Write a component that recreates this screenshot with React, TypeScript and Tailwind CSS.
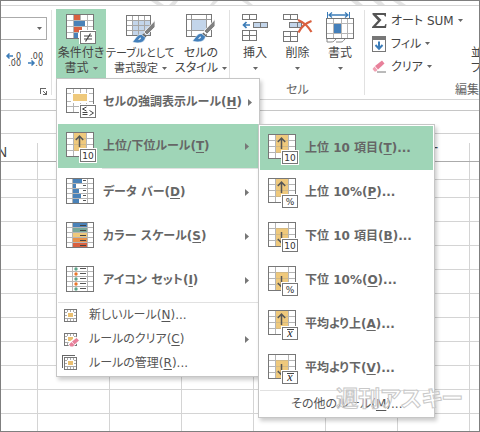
import type { ReactNode } from "react";

// ─── Data ────────────────────────────────────────────────────

type BadgeKind = "ten" | "percent" | "mean";

interface RuleItem {
  label: string;
  accel: string;
  arrow: "up" | "down";
  badge: BadgeKind;
}

const TOP_BOTTOM_RULES: RuleItem[] = [
  { label: "上位 10 項目", accel: "T", arrow: "up", badge: "ten" },
  { label: "上位 10%", accel: "P", arrow: "up", badge: "percent" },
  { label: "下位 10 項目", accel: "B", arrow: "down", badge: "ten" },
  { label: "下位 10%", accel: "O", arrow: "down", badge: "percent" },
  { label: "平均より上", accel: "A", arrow: "up", badge: "mean" },
  { label: "平均より下", accel: "V", arrow: "down", badge: "mean" },
];

const COLUMNS = ["N", "O", "P", "Q", "R", "S", "T", ""];
const ROWS = ["short", "short", ...Array(9).fill("tall"), "rest"];

// ─── Small shared pieces ─────────────────────────────────────

function Caret() {
  return (
    <svg width="5" height="3" viewBox="0 0 5 3" className="shrink-0" aria-hidden="true">
      <path d="M0 0h5L2.5 3z" fill="#666" />
    </svg>
  );
}

function SubmenuArrow() {
  return (
    <svg width="4" height="7" viewBox="0 0 4 7" className="mr-[9px] ml-auto shrink-0" aria-hidden="true">
      <path d="M0 0v7l4-3.5z" fill="#777" />
    </svg>
  );
}

function Accel({ label, accel, dots }: { label: string; accel: string; dots?: boolean }) {
  return (
    <span className="whitespace-nowrap">
      {label}(<u className="underline-offset-2">{accel}</u>){dots && "..."}
    </span>
  );
}

// ─── Menu icons ──────────────────────────────────────────────

function IconFrame({ children }: { children: ReactNode }) {
  return (
    <svg width="31" height="31" viewBox="0 0 31 31" className="shrink-0" shapeRendering="crispEdges" aria-hidden="true">
      {children}
    </svg>
  );
}

function HighlightIcon() {
  return (
    <IconFrame>
      <rect x="0.5" y="0.5" width="27" height="24" fill="#fff" stroke="#777" />
      <path d="M7.5 1v23M14.5 1v23M20.5 1v23M1 5.5h26M1 13.5h26M1 18.5h26" stroke="#b5b5b5" fill="none" />
      <rect x="5" y="5" width="18" height="10" fill="#fff" />
      <rect x="7" y="6" width="14" height="7" fill="#efc97c" />
      <rect x="13" y="16" width="18" height="15" fill="#fff" />
      <rect x="14.5" y="17.5" width="15" height="12" fill="#fff" stroke="#777" />
      <g shapeRendering="auto" stroke="#444" fill="none">
        <path d="M20.5 19l-4 2 4 2M16.5 24.5h5M16.5 26.5h5M23.5 22.5l4 2.5-4 2.5" />
      </g>
    </IconFrame>
  );
}

function RankIcon({ arrow, badge }: { arrow: "up" | "down"; badge: BadgeKind }) {
  return (
    <IconFrame>
      <rect x="0.5" y="0.5" width="27" height="24" fill="#fff" stroke="#777" />
      <rect x="8" y={arrow === "up" ? 1 : 7} width="12" height="17" fill="#efc97c" />
      <path d="M7.5 1v23M20.5 1v23M1 6.5h6M1 12.5h6M1 18.5h6M21 6.5h6M21 12.5h6" stroke="#b5b5b5" fill="none" />
      <path d="M8 6.5h12M8 12.5h12M8 18.5h12" stroke="#d3b983" fill="none" />
      <g shapeRendering="auto" stroke="#555" strokeWidth="1.5" fill="none">
        {arrow === "up" ? <path d="M13.5 15V4M9.8 8l3.7-4 3.7 4" /> : <path d="M13.5 10v11M9.8 17l3.7 4 3.7-4" />}
      </g>
      <rect x="13" y="16" width="18" height="15" fill="#fff" />
      <rect x="14.5" y="17.5" width="15" height="12" fill="#fff" stroke="#777" />
      {badge === "ten" && (
        <text x="22" y="27" fontSize="9" fontWeight="400" textAnchor="middle" fill="#333">10</text>
      )}
      {badge === "percent" && (
        <text x="22" y="27" fontSize="9" fontWeight="400" textAnchor="middle" fill="#333">%</text>
      )}
      {badge === "mean" && (
        <>
          <path d="M19 19.5h7" stroke="#444" />
          <text x="22" y="27" fontSize="12" fontWeight="400" fontStyle="italic" textAnchor="middle" fill="#222" fontFamily="Liberation Serif, serif">x</text>
        </>
      )}
    </IconFrame>
  );
}

function RowsFrame({ children }: { children: ReactNode }) {
  return (
    <IconFrame>
      <rect x="0.5" y="0.5" width="27" height="25" fill="#fff" stroke="#777" />
      <path d="M6.5 1v24M21.5 1v24M1 5.5h26M1 10.5h26M1 15.5h26M1 20.5h26" stroke="#b5b5b5" fill="none" />
      {children}
      <rect x="0.5" y="0.5" width="27" height="25" fill="none" stroke="#777" />
    </IconFrame>
  );
}

function DataBarIcon() {
  return (
    <RowsFrame>
      {[9, 3, 6, 8, 6].map((w, i) => (
        <g key={i}>
          <rect x="7" y={1 + i * 5} width={w} height="4" fill="#4a82b8" />
          <rect x="17" y={2 + i * 5} width="3" height="1" fill="#555" />
        </g>
      ))}
    </RowsFrame>
  );
}

function ColorScaleIcon() {
  return (
    <RowsFrame>
      {["#4a82b8", "#78a89a", "#efc97c", "#e8924a", "#d9603f"].map((fill, i) => (
        <g key={fill}>
          <rect x="7" y={1 + i * 5} width="14" height="4" fill={fill} />
          <rect x="14" y={3 + i * 5} width="6" height="1" fill="#444" />
        </g>
      ))}
    </RowsFrame>
  );
}

function IconSetIcon() {
  return (
    <RowsFrame>
      {["#5fa58a", "#e8762c", "#5fa58a", "#e8762c", "#5fa58a"].map((fill, i) => (
        <g key={i}>
          <circle cx="10" cy={3 + i * 5} r="1.7" fill={fill} shapeRendering="auto" />
          <rect x="14" y={2 + i * 5} width="6" height="1" fill="#555" />
        </g>
      ))}
    </RowsFrame>
  );
}

function SmallRuleIcon({ kind }: { kind: "new" | "clear" | "manage" }) {
  return (
    <svg width="17" height="16" viewBox="0 0 17 16" className="shrink-0" shapeRendering="crispEdges" aria-hidden="true">
      {kind === "manage" && <path d="M0.5 13V0.5H13" stroke="#666" fill="none" />}
      <rect x="2.5" y="2.5" width="12" height="12" fill="#fff" stroke="#777" />
      <path d="M5.5 3v11M8.5 3v11M11.5 3v11M3 5.5h11M3 8.5h11M3 11.5h11" stroke="#aaa" fill="none" />
      <rect x="5" y="5" width="7" height="6" fill="#fff" />
      <rect x="6" y="6" width="5" height="4" fill="#eabf70" />
      {kind === "clear" && (
        <g shapeRendering="auto">
          <path d="M6 12l8-6.5 3 3-1 3-5 4.500H7z" fill="#fff" />
          <path d="M10 10.500L14.500 7l2.500 2.500-4.500 4z" fill="#e8809a" />
          <path d="M9.500 11l3 3-1.500 1.500H8.500L7 13.500z" fill="#e8809a" />
        </g>
      )}
    </svg>
  );
}

// ─── Ribbon icons ────────────────────────────────────────────

function ConditionalIcon() {
  return (
    <svg width="30" height="30" viewBox="0 0 30 30" shapeRendering="crispEdges" aria-hidden="true">
      <rect x="0.5" y="0.5" width="27" height="24" fill="#fff" stroke="#777" />
      <path d="M7.5 1v23M14.5 1v23M21.5 1v23M1 6.5h26M1 12.5h26M1 18.5h26" stroke="#b5b5b5" fill="none" />
      <rect x="8" y="1" width="6" height="5" fill="#d9603f" />
      <rect x="8" y="7" width="11" height="5" fill="#4a82b8" />
      <rect x="8" y="13" width="8" height="5" fill="#d9603f" />
      <rect x="8" y="19" width="4" height="5" fill="#4a82b8" />
      <rect x="13" y="16" width="17" height="14" fill="#fff" />
      <rect x="14.5" y="17.5" width="15" height="12" fill="#fff" stroke="#777" />
      <g shapeRendering="auto" stroke="#444" strokeWidth="1.2" fill="none">
        <path d="M18 22h8M18 25h8M24.5 19.5l-5 8" />
      </g>
    </svg>
  );
}

function Brush() {
  return (
    <g shapeRendering="auto">
      <path d="M29 5.5v6.5L21 20l-3-3z" fill="#808080" stroke="#fff" strokeWidth="0.8" />
      <path d="M17.5 18.5l3 3-1.5 1.5-3-3z" fill="#666" />
      <path d="M15.5 19.5c-4-.5-5 3-9 7.5 6 2 12 1 13-4.500z" fill="#4480bb" stroke="#fff" strokeWidth="0.6" />
      <path d="M15 22.5c-1.500 0-2 1.500-3 2.500 2 0 3-1 3-2.500z" fill="#fff" />
    </g>
  );
}

function TableFormatIcon() {
  return (
    <svg width="30" height="29" viewBox="0 0 30 29" shapeRendering="crispEdges" aria-hidden="true">
      <rect x="0.5" y="0.5" width="24" height="20" fill="#fff" stroke="#777" />
      <rect x="7" y="6" width="17" height="14" fill="#c3d5ea" />
      <path d="M6.5 1v19M12.5 1v19M18.5 1v19M1 5.5h23M1 10.5h23M1 15.5h23" stroke="#a6a6a6" fill="none" />
      <Brush />
    </svg>
  );
}

function CellStyleIcon() {
  return (
    <svg width="30" height="30" viewBox="0 0 30 30" shapeRendering="crispEdges" aria-hidden="true">
      <rect x="0.5" y="0.5" width="25" height="22" fill="#fff" stroke="#777" />
      <path d="M5.5 1v21M20.5 1v21M1 5.5h24M1 16.5h24" stroke="#999" fill="none" />
      <rect x="6" y="6" width="14" height="10" fill="#c3d5ea" />
      <Brush />
    </svg>
  );
}

function InsertIcon() {
  return (
    <svg width="27" height="30" viewBox="0 0 27 30" shapeRendering="crispEdges" aria-hidden="true">
      <path d="M0.5 0.5h14v5h-14zM7.5 0.5v5M0.5 16.5h14v10h-14zM7.5 16.5v10M0.5 21.5h14" fill="#fff" stroke="#777" />
      <path d="M11.5 8.5h14v5h-14zM18.5 8.5v5" fill="#c3d5ea" stroke="#777" />
      <path d="M1 11h7M4.5 8L1.5 11l3 3" shapeRendering="auto" stroke="#3b7cb8" strokeWidth="1.7" fill="none" />
    </svg>
  );
}

function DeleteIcon() {
  return (
    <svg width="30" height="30" viewBox="0 0 30 30" shapeRendering="crispEdges" aria-hidden="true">
      <path d="M0.5 0.5h14v5h-14zM7.5 0.5v5M0.5 17.5h14v10h-14zM7.5 17.5v10M0.5 22.5h14" fill="#fff" stroke="#777" />
      <path d="M6.5 8.5h12v5h-12zM14.5 8.5v5" fill="#c3d5ea" stroke="#777" />
      <path d="M15 6c5 2 10 6 13.5 12M28.5 7C23 9 18 13 15.5 18.5" shapeRendering="auto" stroke="#d9603f" strokeWidth="2.2" fill="none" />
    </svg>
  );
}

function FormatIcon() {
  return (
    <svg width="29" height="32" viewBox="0 0 29 32" shapeRendering="crispEdges" aria-hidden="true">
      <path d="M1.5 0v6M23.5 0v6" stroke="#3b7cb8" />
      <path d="M3 3h19M6 0.5L3 3l3 2.5M19 0.5L22 3l-3 2.5" shapeRendering="auto" stroke="#3b7cb8" strokeWidth="1.3" fill="none" />
      <rect x="0.5" y="6.5" width="27" height="20" fill="#fff" stroke="#777" />
      <path d="M7.5 7v19M15.5 7v19M21.5 7v19M1 11.5h26M1 21.5h26" stroke="#b5b5b5" fill="none" />
      <rect x="8" y="12" width="7" height="9" fill="#4480bb" />
      <path d="M1 27v3h4c3 0 3-1 5-3M10 30h5c2 0 2-1 4-3" shapeRendering="auto" stroke="#888" fill="none" />
    </svg>
  );
}

function SumIcon() {
  return (
    <svg width="15" height="15" viewBox="0 0 15 15" aria-hidden="true">
      <path d="M0.5 0H14v3.5h-1L12 2H4.5l5 5-5.5 6h8.5l1-2h1l-.5 4H0v-1l6-6.5-5.5-6z" fill="#555" />
    </svg>
  );
}

function FillIcon() {
  return (
    <svg width="14" height="16" viewBox="0 0 14 16" aria-hidden="true">
      <rect x="0.5" y="0.5" width="13" height="15" fill="#fff" stroke="#777" />
      <rect width="14" height="4" fill="#777" />
      <path d="M7 5.5v7M3.5 9L7 12.7 10.5 9" stroke="#3b7cb8" strokeWidth="2" fill="none" />
    </svg>
  );
}

function EraserIcon() {
  return (
    <svg width="15" height="13" viewBox="0 0 15 13" aria-hidden="true">
      <path d="M10 0.5L12.5 3.5 6 9.5 3 6z" fill="#e8809a" />
      <path d="M2.5 6.5L5.5 10 4 11.5H2.5L0.5 9z" fill="#f0a0b2" />
      <path d="M5 12h9" stroke="#777" />
    </svg>
  );
}

function DecimalIcon({ mode }: { mode: "more" | "less" }) {
  return (
    <svg width="15" height="15" viewBox="0 0 15 15" className="overflow-visible" aria-hidden="true">
      <g fontSize="8" fill="#444" textAnchor="end">
        <text x="15" y="7">{mode === "more" ? ".0" : ".00"}</text>
        <text x="15" y="14">{mode === "more" ? ".00" : ".0"}</text>
      </g>
      {mode === "more" ? (
        <path d="M7 4H1M3.5 1.5L1 4l2.5 2.5" stroke="#3b7cb8" strokeWidth="1.5" fill="none" />
      ) : (
        <path d="M0 11h6M3.5 8.5L6 11l-2.5 2.5" stroke="#3b7cb8" strokeWidth="1.5" fill="none" />
      )}
    </svg>
  );
}

// ─── Ribbon ──────────────────────────────────────────────────

function BigButton({ icon, lines, className }: { icon: ReactNode; lines: string[]; className: string }) {
  const last = lines[lines.length - 1];
  return (
    <button type="button" className={`flex h-[69px] shrink-0 flex-col items-center leading-[15px] whitespace-nowrap ${className}`}>
      <span className="flex h-[37px] items-end pb-[2px]">{icon}</span>
      {lines.length > 1 ? (
        <>
          <span>{lines[0]}</span>
          <span className="flex items-center gap-1">
            {last}
            <Caret />
          </span>
        </>
      ) : (
        <>
          <span>{last}</span>
          <span className="flex h-[15px] items-center">
            <Caret />
          </span>
        </>
      )}
    </button>
  );
}

function EditRow({ icon, label }: { icon: ReactNode; label: string }) {
  return (
    <button type="button" className="flex h-[23px] items-center gap-1 whitespace-nowrap">
      <span className="flex w-[15px]">{icon}</span>
      {label}
      <Caret />
    </button>
  );
}

function Divider() {
  return <div className="mt-1 h-[85px] w-px shrink-0 bg-[#e1e1e1]" />;
}

function Ribbon() {
  return (
    <div className="flex h-[94px] border-b border-[#d4d4d4] text-[#444]">
      {/* Number format */}
      <div className="flex w-[50px] shrink-0 flex-col pt-[11px]">
        <button type="button" aria-label="表示形式" className="mr-1 flex h-[23px] items-center justify-end border border-l-0 border-[#ababab] pr-1">
          <Caret />
        </button>
        <div className="flex gap-[7px] pt-3 pl-[5px]">
          <button type="button" aria-label="小数点以下の表示桁数を増やす">
            <DecimalIcon mode="more" />
          </button>
          <button type="button" aria-label="小数点以下の表示桁数を減らす">
            <DecimalIcon mode="less" />
          </button>
        </div>
        <button type="button" aria-label="数値の設定" className="mt-auto mr-1 mb-1 self-end">
          <svg width="7" height="7" viewBox="0 0 7 7" shapeRendering="crispEdges" aria-hidden="true">
            <path d="M0.5 6V0.5H6M3 3l3 3M6.5 3v3.5H3" stroke="#666" fill="none" />
          </svg>
        </button>
      </div>
      <Divider />

      {/* Styles */}
      <div className="ml-1 flex shrink-0 items-start pt-[3px]">
        <div className="relative">
          <BigButton icon={<ConditionalIcon />} lines={["条件付き", "書式"]} className="w-[50px] bg-[#9fd5b7]" />
          <RuleMenu />
        </div>
        <BigButton icon={<TableFormatIcon />} lines={["テーブルとして", "書式設定"]} className="w-[69px] text-[11px]" />
        <BigButton icon={<CellStyleIcon />} lines={["セルの", "スタイル"]} className="w-[52px]" />
      </div>
      <div className="ml-[2px]">
        <Divider />
      </div>

      {/* Cells */}
      <div className="flex shrink-0 flex-col items-center pt-[3px] pr-[3px] pl-1">
        <div className="flex">
          <BigButton icon={<InsertIcon />} lines={["挿入"]} className="w-[42px]" />
          <BigButton icon={<DeleteIcon />} lines={["削除"]} className="w-[43px]" />
          <BigButton icon={<FormatIcon />} lines={["書式"]} className="w-[42px]" />
        </div>
        <span className="pt-1 leading-4 text-[#666]">セル</span>
      </div>
      <Divider />

      {/* Editing */}
      <div className="flex min-w-0 flex-1 flex-col overflow-hidden pt-[3px] pl-[7px]">
        <div className="flex h-[69px] justify-between">
          <div className="flex shrink-0 flex-col">
            <EditRow icon={<SumIcon />} label="オート SUM" />
            <EditRow icon={<FillIcon />} label="フィル" />
            <EditRow icon={<EraserIcon />} label="クリア" />
          </div>
          <div className="flex w-2 shrink-0 flex-col pt-[37px] leading-[15px]">
            <span>並</span>
            <span>フ</span>
          </div>
        </div>
        <span className="self-end pt-1 leading-4 text-[#666]">編集</span>
      </div>
    </div>
  );
}

// ─── Menus ───────────────────────────────────────────────────

function MenuRow({ icon, children, active, hasSub }: { icon: ReactNode; children: ReactNode; active?: boolean; hasSub?: boolean }) {
  return (
    <button
      type="button"
      role="menuitem"
      className={`flex h-11 w-full items-center gap-[6px] pl-2 text-left font-bold text-[#666] ${active ? "bg-[#9fd5b7]" : ""}`}
    >
      <span className="shrink-0 pt-[2px]">{icon}</span>
      {children}
      {hasSub && <SubmenuArrow />}
    </button>
  );
}

function SmallRow({
  kind,
  label,
  accel,
  dots,
  hasSub,
}: {
  kind: "new" | "clear" | "manage";
  label: string;
  accel: string;
  dots?: boolean;
  hasSub?: boolean;
}) {
  return (
    <button type="button" role="menuitem" className="flex h-6 w-full items-center gap-[10px] pl-1 text-left">
      <SmallRuleIcon kind={kind} />
      <Accel label={label} accel={accel} dots={dots} />
      {hasSub && <SubmenuArrow />}
    </button>
  );
}

function RuleMenu() {
  return (
    <div role="menu" className="absolute top-full left-0 z-10 w-[204px] border border-[#c6c6c6] bg-white p-px text-[#555] shadow-[2px_3px_4px_rgba(0,0,0,0.2)]">
      <MenuRow icon={<HighlightIcon />} hasSub>
        <Accel label="セルの強調表示ルール" accel="H" />
      </MenuRow>
      <div className="relative">
        <MenuRow icon={<RankIcon arrow="up" badge="ten" />} active hasSub>
          <Accel label="上位/下位ルール" accel="T" />
        </MenuRow>
        <TopBottomMenu />
      </div>
      <hr className="mb-px ml-11 border-[#e1e1e1]" />
      <MenuRow icon={<DataBarIcon />} hasSub>
        <Accel label="データ バー" accel="D" />
      </MenuRow>
      <MenuRow icon={<ColorScaleIcon />} hasSub>
        <Accel label="カラー スケール" accel="S" />
      </MenuRow>
      <MenuRow icon={<IconSetIcon />} hasSub>
        <Accel label="アイコン セット" accel="I" />
      </MenuRow>
      <hr className="border-[#e1e1e1]" />
      <SmallRow kind="new" label="新しいルール" accel="N" dots />
      <SmallRow kind="clear" label="ルールのクリア" accel="C" hasSub />
      <SmallRow kind="manage" label="ルールの管理" accel="R" dots />
    </div>
  );
}

function TopBottomMenu() {
  return (
    <div role="menu" className="absolute top-0 left-full z-20 w-[177px] border border-[#c6c6c6] bg-white p-px shadow-[2px_3px_4px_rgba(0,0,0,0.2)]">
      {TOP_BOTTOM_RULES.map((rule, i) => (
        <MenuRow key={rule.accel} icon={<RankIcon arrow={rule.arrow} badge={rule.badge} />} active={i === 0}>
          <Accel label={rule.label} accel={rule.accel} dots />
        </MenuRow>
      ))}
      <hr className="border-[#e1e1e1]" />
      <button type="button" role="menuitem" className="flex h-[25px] w-full items-center pl-[31px] text-left">
        <Accel label="その他のルール" accel="M" dots />
      </button>
    </div>
  );
}

// ─── Sheet ───────────────────────────────────────────────────

function Sheet() {
  return (
    <div className="flex flex-1 flex-col">
      <div className="h-[11px] border-b border-[#c6c6c6]" />
      <div className="h-[23px] border-b border-[#d0d0d0]" />
      <div className="flex h-7 items-end border-b border-[#ababab] text-sm text-[#444] [font-family:'Liberation_Sans',sans-serif]">
        {COLUMNS.map((name, i) => (
          <div
            key={i}
            className={`flex h-[18px] shrink-0 items-center justify-center border-r border-[#d4d4d4] ${
              i === 0 ? "w-[37px] justify-start" : i === COLUMNS.length - 1 ? "flex-1 border-r-0" : "w-[72px]"
            }`}
          >
            <span className={i === 0 ? "-ml-1" : ""}>{name}</span>
          </div>
        ))}
      </div>
      {ROWS.map((size, r) => (
        <div
          key={r}
          className={`flex ${size === "short" ? "h-[18px]" : size === "tall" ? "h-6" : "min-h-4 flex-1"} ${
            size === "rest" ? "" : "border-b border-[#d4d4d4]"
          }`}
        >
          {COLUMNS.map((_, i) => (
            <div
              key={i}
              className={
                i === 0
                  ? "w-[37px] shrink-0 border-r border-[#d4d4d4]"
                  : i === COLUMNS.length - 1
                    ? "flex-1"
                    : "w-[72px] shrink-0 border-r border-[#d4d4d4]"
              }
            />
          ))}
        </div>
      ))}
    </div>
  );
}

export default function App() {
  return (
    <div className="relative flex min-h-screen flex-col overflow-hidden border border-[#7f7f7f] bg-white text-xs [font-family:'DejaVu_Sans','Noto_Sans_CJK_JP',sans-serif] [font-feature-settings:'palt']">
      {/* Title bar edge with its faint pattern */}
      <div className="h-[5px] border-b border-[#d4d4d4]">
        <svg width="410" height="4" viewBox="0 0 410 4" aria-hidden="true">
          <path d="M150 0h7l6 4h-7zM168 4l4-4h5l-3 4zM209 4l3-4h5l-4 4zM241 0h6l5 4h-5zM350 0h7l5 4h-7zM372 0h8l4 4h-7zM392 0h7l6 4h-7z" fill="#e3e3e3" />
        </svg>
      </div>
      <Ribbon />
      <Sheet />
      <div className="pointer-events-none absolute right-4 bottom-4 z-30 text-[22px] leading-8 font-bold whitespace-nowrap text-white/40 [-webkit-text-stroke:1px_#c8c8c8]">
        週刊アスキー
      </div>
    </div>
  );
}
